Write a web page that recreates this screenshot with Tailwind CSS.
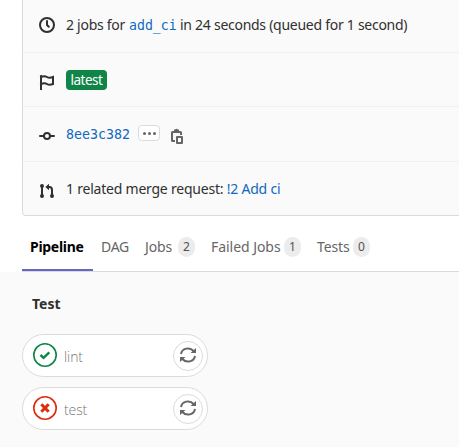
<!DOCTYPE html>
<html lang="en">
<head>
<meta charset="utf-8">
<title>Pipeline</title>
<script src="https://cdn.jsdelivr.net/npm/@tailwindcss/browser@4"></script>
</head>
<body class="h-[447px] w-[459px] overflow-hidden bg-white font-['Noto_Sans',sans-serif] text-[14px] leading-5 text-[#303030]">
<section class="ml-[22px] h-[216px] rounded-bl-[4px] border-b border-l border-[#dbdbdb] bg-[#fafafa]">
  <div class="flex h-[53px] items-start border-b border-[#f0f0f0] pt-[15px] pl-4">
    <svg class="mt-[2px] size-4 shrink-0" viewBox="0 0 16 16" fill="none" stroke="#303030" stroke-width="2"><circle cx="8" cy="8" r="7"/><path d="M8 4v4l1.800 1.800" stroke-linecap="round"/></svg>
    <p class="ml-[11px] flex whitespace-pre"><span class="w-[63px] tracking-[-0.27px]">2 jobs for </span><a class="mt-px w-[48px] font-['DejaVu_Sans_Mono',monospace] text-[13.2px] text-[#1068bf]">add_ci</a><span class="ml-[3px] tracking-[-0.27px]">in 24 seconds (queued for 1 second)</span></p>
  </div>
  <div class="flex h-[54px] items-start border-b border-[#f0f0f0] pt-[17px] pl-4">
    <svg class="mt-[4px] size-4 shrink-0" viewBox="0 0 16 16" fill="none" stroke="#303030" stroke-width="2"><path d="M2 15V2.200M2 3c3-1.500 4.500-1 6 0s3.500 1 6 0v7c-2.500 1-4.500 1-6 0s-3-1.500-6 0" stroke-linecap="square"/></svg>
    <span class="ml-[11px] flex h-5 w-[41px] justify-center rounded-[4px] bg-[#108548] text-[13.5px] leading-5 tracking-[-0.5px] text-white">latest</span>
  </div>
  <div class="flex h-[55px] items-start border-b border-[#f0f0f0] pt-[17px] pl-4">
    <svg class="mt-[4px] size-4 shrink-0" viewBox="0 0 16 16" fill="none" stroke="#303030" stroke-width="2"><circle cx="8" cy="8" r="3"/><path d="M1 8h4M11 8h4" stroke-linecap="round"/></svg>
    <a class="mt-px ml-[11px] w-[65px] font-['DejaVu_Sans_Mono',monospace] text-[13.3px] text-[#1068bf]">8ee3c382</a>
    <span class="mt-[1px] ml-[7px] flex h-4 w-[22px] items-center justify-center rounded-[4px] border border-[#dbdbdb] bg-white"><svg class="h-[3px] w-[13px]" viewBox="0 0 13 3" fill="#666"><circle cx="1.500" cy="1.500" r="1.500"/><circle cx="6.500" cy="1.500" r="1.500"/><circle cx="11.500" cy="1.500" r="1.500"/></svg></span>
    <svg class="mt-[4px] ml-[9px] size-4 shrink-0" viewBox="0 0 16 16" fill="#666"><path fill-rule="evenodd" d="M5 1.500h1A2 2 0 0 1 9 1.500h1V3h1.500A1.500 1.500 0 0 1 13 4.500V7h-2V5H4v7h2v2H3.500A1.500 1.500 0 0 1 2 12.500v-8A1.500 1.500 0 0 1 3.500 3H5zM8 8h5a1 1 0 0 1 1 1v6a1 1 0 0 1-1 1H8a1 1 0 0 1-1-1V9a1 1 0 0 1 1-1zm1 2v4h3v-4z"/></svg>
  </div>
  <div class="flex h-[53px] items-start pt-[17px] pl-4">
    <svg class="mt-[4px] size-4 shrink-0" viewBox="0 0 16 16" fill="none" stroke="#303030" stroke-width="2"><path d="M3 3v10M9 4h1.500Q13 4 13 7v6"/><g fill="#303030" stroke="none"><circle cx="3" cy="3" r="2"/><circle cx="3" cy="13" r="2"/><circle cx="13" cy="13" r="2"/><path d="M10 .8v6.400L6.300 4z"/></g></svg>
    <p class="ml-[11px] whitespace-pre tracking-[-0.22px]">1 related merge request: <a class="text-[#1068bf]">!2 Add ci</a></p>
  </div>
</section>
<nav class="ml-[22px] flex h-14 border-b border-[#dbdbdb] whitespace-nowrap text-[#666]">
  <a class="h-[55px] w-[71px] border-b-2 border-[#6666c4] pt-[21px] pl-2 font-bold tracking-[-0.3px] text-black">Pipeline</a>
  <a class="w-[52px] pt-[21px] pl-2 tracking-[-0.3px]">DAG</a>
  <a class="flex w-[66px] pt-[21px]"><span class="w-[33px] tracking-[-0.1px]">Jobs</span><span class="flex h-5 w-[17px] justify-center rounded-full bg-[#ececec] text-[12px] text-[#525252]">2</span></a>
  <a class="flex w-[106px] pt-[21px]"><span class="w-[73px] tracking-[-0.05px]">Failed Jobs</span><span class="flex h-5 w-[17px] justify-center rounded-full bg-[#ececec] text-[12px] text-[#525252]">1</span></a>
  <a class="flex pt-[21px]"><span class="w-[36px] tracking-[-0.1px]">Tests</span><span class="flex h-5 w-[17px] justify-center rounded-full bg-[#ececec] text-[12px] text-[#525252]">0</span></a>
</nav>
<main class="h-[175px] bg-[#fafafa] pt-[22px] pl-[22px]">
  <h2 class="h-10 pl-[10px] font-bold">Test</h2>
  <div class="flex flex-col gap-[10px]">
    <div class="flex h-[43px] w-[186px] items-center rounded-full border border-[#dbdbdb] bg-white pr-[4px] pl-[10px]">
      <svg class="-mt-[2px] size-6 shrink-0" viewBox="0 0 24 24" fill="none" stroke="#108548"><circle cx="12" cy="12" r="11.200" stroke-width="1.600"/><path d="M7.500 12l3 2.800 5.800-5.500" stroke-width="2.500"/></svg>
      <span class="mt-[3px] ml-[7px] flex-1 font-['Open_Sans',sans-serif] font-light tracking-[-0.1px] text-[#777]">lint</span>
      <span class="flex size-[30px] items-center justify-center rounded-full border border-[#dbdbdb]"><svg class="-mt-px size-4" viewBox="0 0 16 16" fill="none" stroke="#666" stroke-width="2"><path d="M1 7a7 6.500 0 0 1 12.500-3M15 9a7 6.500 0 0 1-12.500 3"/><path d="M16 1v5h-5.500zM0 15v-5h5.500z" fill="#666" stroke="none"/></svg></span>
    </div>
    <div class="flex h-[43px] w-[186px] items-center rounded-full border border-[#dbdbdb] bg-white pr-[4px] pl-[10px]">
      <svg class="-mt-[2px] size-6 shrink-0" viewBox="0 0 24 24" fill="none" stroke="#dd2b0e"><circle cx="12" cy="12" r="11.200" stroke-width="1.600"/><path d="M8.300 8.300l7.400 7.400M15.700 8.300l-7.400 7.400" stroke-width="3"/></svg>
      <span class="mt-[3px] ml-[7px] flex-1 font-['Open_Sans',sans-serif] font-light tracking-[-0.1px] text-[#777]">test</span>
      <span class="flex size-[30px] items-center justify-center rounded-full border border-[#dbdbdb]"><svg class="-mt-px size-4" viewBox="0 0 16 16" fill="none" stroke="#666" stroke-width="2"><path d="M1 7a7 6.500 0 0 1 12.500-3M15 9a7 6.500 0 0 1-12.500 3"/><path d="M16 1v5h-5.500zM0 15v-5h5.500z" fill="#666" stroke="none"/></svg></span>
    </div>
  </div>
</main>
</body>
</html>
